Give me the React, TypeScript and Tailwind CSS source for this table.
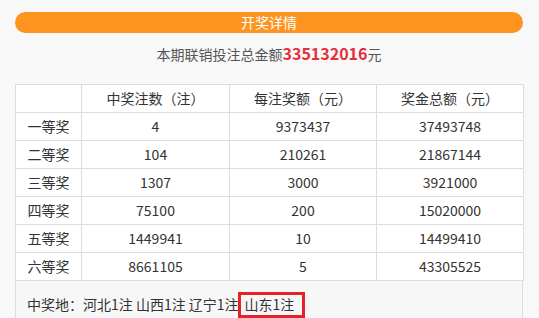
const rows = [
  ['一等奖', '4', '9373437', '37493748'],
  ['二等奖', '104', '210261', '21867144'],
  ['三等奖', '1307', '3000', '3921000'],
  ['四等奖', '75100', '200', '15020000'],
  ['五等奖', '1449941', '10', '14499410'],
  ['六等奖', '8661105', '5', '43305525'],
]

export default function App() {
  return (
    <div
      className="h-[318px] w-[539px] overflow-hidden bg-[#f8f8f8] pl-[15px] pr-[16px] pt-[12px] text-[14px] text-[#333]"
      style={{ fontFamily: '"Noto Sans CJK SC", "Liberation Sans", sans-serif' }}
    >
      <div className="h-[21px] rounded-full bg-[#fd9420] text-center leading-[21px] text-white">开奖详情</div>

      <div className="mt-[8px] h-[24px] text-center leading-[24px] text-[#555]">
        本期联销投注总金额<span className="text-[16px] font-bold text-[#e4303c]">335132016</span>元
      </div>

      <table className="mt-[19px] w-[508px] table-fixed border-collapse bg-white text-center">
        <colgroup>
          <col className="w-[66px]" />
          <col className="w-[148px]" />
          <col className="w-[147px]" />
          <col className="w-[147px]" />
        </colgroup>
        <thead>
          <tr className="h-[28px]">
            <th className="border border-[#ddd] font-normal"></th>
            <th className="border border-[#ddd] font-normal">中奖注数（注）</th>
            <th className="border border-[#ddd] font-normal">每注奖额（元）</th>
            <th className="border border-[#ddd] font-normal">奖金总额（元）</th>
          </tr>
        </thead>
        <tbody>
          {rows.map((r) => (
            <tr key={r[0]} className="h-[28px]">
              {r.map((c, i) => (
                <td key={i} className="border border-[#ddd] p-0 leading-[27px]">
                  {c}
                </td>
              ))}
            </tr>
          ))}
        </tbody>
      </table>

      <div className="h-[60px] border-x border-[#ddd] bg-[#f7f7f7] pl-[11px] pt-[11px] leading-[19px]">
        中奖地：河北1注 山西1注 辽宁1注
        <span className="ml-[-1px] inline-block border-[3px] border-[#e8202a] bg-[#f7f7f7] pb-[1px] pl-[4px] pr-[8px] leading-[19px]">
          山东1注
        </span>
      </div>
    </div>
  )
}
